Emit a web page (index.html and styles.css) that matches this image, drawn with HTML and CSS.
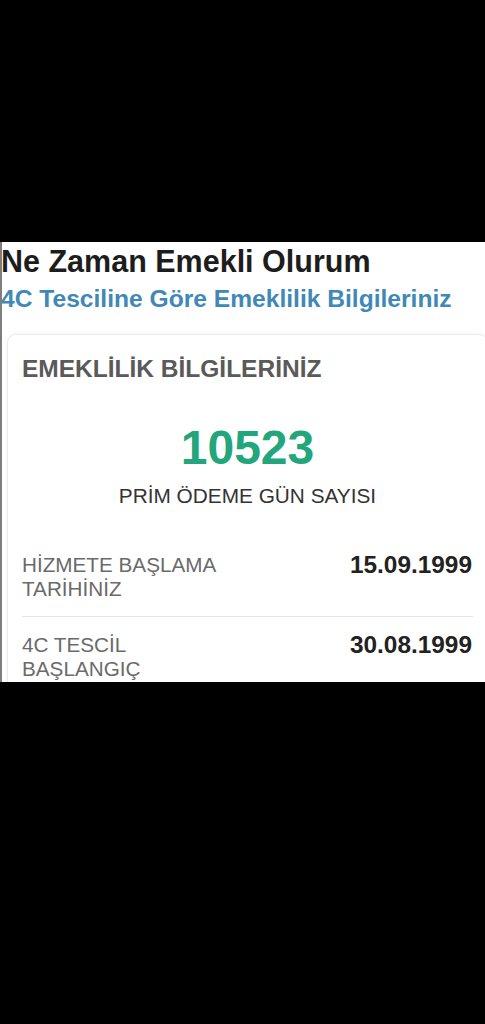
FILE: index.html
```html
<!DOCTYPE html>
<html lang="tr">
<head>
<meta charset="utf-8">
<title>Ne Zaman Emekli Olurum</title>
<link rel="stylesheet" href="styles.css">
</head>
<body>
<div class="bar-top"></div>
<main class="screen">
  <h1 class="title">Ne Zaman Emekli Olurum</h1>
  <h2 class="subtitle">4C Tesciline Göre Emeklilik Bilgileriniz</h2>
  <section class="card">
    <h3 class="card-title">EMEKLİLİK BİLGİLERİNİZ</h3>
    <div class="days">10523</div>
    <div class="days-label">PRİM ÖDEME GÜN SAYISI</div>
    <div class="rows">
      <div class="row">
        <div class="label">HİZMETE BAŞLAMA TARİHİNİZ</div>
        <div class="value">15.09.1999</div>
      </div>
      <div class="row">
        <div class="label">4C TESCİL BAŞLANGIÇ</div>
        <div class="value">30.08.1999</div>
      </div>
    </div>
  </section>
</main>
<div class="bar-bottom"></div>
</body>
</html>
```
FILE: styles.css
```css
html, body {
  margin: 0;
  padding: 0;
  background: #000;
}
body {
  font-family: "Liberation Sans", Arial, sans-serif;
  width: 485px;
  height: 1024px;
  overflow: hidden;
}
.bar-top {
  height: 242px;
  background: #000;
}
.screen {
  height: 440px;
  background: #fff;
  border-left: 2px solid #7e7e7e;
  box-sizing: border-box;
  overflow: hidden;
  display: flex;
  flex-direction: column;
}
.title {
  margin: 2px 0 0 -1px;
  font-size: 30.5px;
  line-height: 34px;
  font-weight: 700;
  color: #1d1d1d;
}
.subtitle {
  margin: 6px 0 0 -1px;
  font-size: 24.6px;
  line-height: 30px;
  font-weight: 700;
  color: #4088b7;
}
.card {
  margin: 20px -3px 0 5px;
  padding: 20px 14px 0 14px;
  background: #fff;
  border: 1px solid #ececec;
  border-radius: 9px;
  box-shadow: 0 0 4px rgba(0,0,0,0.06);
  flex: 1;
}
.card-title {
  margin: 0;
  font-size: 24.5px;
  line-height: 28px;
  font-weight: 700;
  color: #5a5a5a;
}
.days {
  margin-top: 38px;
  text-align: center;
  font-size: 48px;
  line-height: 54px;
  font-weight: 700;
  color: #24a67d;
}
.days-label {
  margin-top: 9px;
  text-align: center;
  font-size: 20.8px;
  line-height: 24px;
  color: #333;
}
.rows {
  margin-top: 29px;
}
.row {
  display: flex;
  justify-content: space-between;
  align-items: flex-start;
  padding: 16px 0 15px 0;
  border-bottom: 1px solid #e4e4e4;
}
.label {
  flex: 0 1 215px;
  font-size: 20.7px;
  line-height: 24px;
  color: #6a6a6a;
}
.value {
  font-size: 24.4px;
  line-height: 24px;
  font-weight: 700;
  color: #222;
  margin-right: 1px;
}
.bar-bottom {
  height: 342px;
  background: #000;
}
```
